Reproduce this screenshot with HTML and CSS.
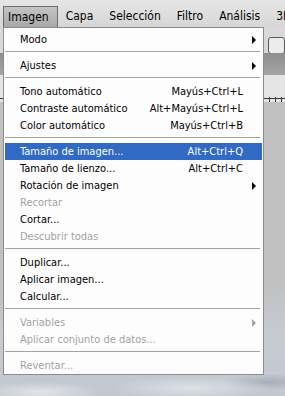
FILE: index.html
```html
<!DOCTYPE html>
<html>
<head>
<title>Imagen</title>
<link rel="stylesheet" href="styles.css">
</head>
<body>
<div class="screen">

<div class="menubar">
<span class="menu-title active">Imagen</span>
<span class="menu-title">Capa</span>
<span class="menu-title">Selección</span>
<span class="menu-title">Filtro</span>
<span class="menu-title">Análisis</span>
<span class="menu-title">3D</span>
</div>

<div class="workspace">
<div class="options-bar">
<span class="opt-box first"></span>
<span class="opt-box"></span>
</div>
<div class="tab-bar"></div>
<div class="ruler"></div>
<div class="canvas"></div>
</div>

<!-- the open Imagen menu -->
<div class="dropdown">
<div class="item sub"><span class="label">Modo</span><span class="arrow"></span></div>
<div class="sep"></div>
<div class="item sub"><span class="label">Ajustes</span><span class="arrow"></span></div>
<div class="sep"></div>
<div class="item"><span class="label">Tono automático</span><span class="keys">Mayús+Ctrl+L</span></div>
<div class="item"><span class="label">Contraste automático</span><span class="keys">Alt+Mayús+Ctrl+L</span></div>
<div class="item"><span class="label">Color automático</span><span class="keys">Mayús+Ctrl+B</span></div>
<div class="sep"></div>
<div class="item selected"><span class="label">Tamaño de imagen...</span><span class="keys">Alt+Ctrl+Q</span></div>
<div class="item"><span class="label">Tamaño de lienzo...</span><span class="keys">Alt+Ctrl+C</span></div>
<div class="item sub"><span class="label">Rotación de imagen</span><span class="arrow"></span></div>
<div class="item disabled"><span class="label">Recortar</span></div>
<div class="item"><span class="label">Cortar...</span></div>
<div class="item disabled"><span class="label">Descubrir todas</span></div>
<div class="sep"></div>
<div class="item"><span class="label">Duplicar...</span></div>
<div class="item"><span class="label">Aplicar imagen...</span></div>
<div class="item"><span class="label">Calcular...</span></div>
<div class="sep"></div>
<div class="item sub disabled"><span class="label">Variables</span><span class="arrow"></span></div>
<div class="item disabled"><span class="label">Aplicar conjunto de datos...</span></div>
<div class="sep"></div>
<div class="item disabled"><span class="label">Reventar...</span></div>
</div>

</div>
</body>
</html>
```

FILE: styles.css
```css
body{
margin:0;
background:#c0c0c0;
}

.screen{
position:relative;
width:285px;
height:396px;
overflow:hidden;
font-family:"DejaVu Sans Condensed","DejaVu Sans",sans-serif;
font-stretch:condensed;
color:#000;
}

/* top menu bar */
.menubar{
height:27px;
box-sizing:border-box;
display:flex;
align-items:flex-end;
gap:3px;
padding-left:3px;
background:linear-gradient(#e6e6e6,#d6d6d6);
font-size:12px;
}

.menu-title{
height:21px;
line-height:20px;
padding:0 8px 0 5px;
box-sizing:border-box;
white-space:nowrap;
}

.menu-title.active{
background:linear-gradient(#c4c4c4,#a8a8a8);
border:1px solid #6c6c6c;
border-bottom:none;
padding-left:4px;
}

/* workspace behind the menu */
.workspace{
height:369px;
display:flex;
flex-direction:column;
}

.options-bar{
height:26px;
flex:none;
display:flex;
align-items:flex-end;
gap:10px;
padding-left:240px;
background:#d9d9d9;
}

.opt-box{
width:22px;
height:15px;
margin-bottom:-1px;
border:1px solid #5a5a5a;
border-radius:3px;
background:#ececec;
}

.tab-bar{
height:22px;
flex:none;
background:linear-gradient(#8e8e8e,#a6a6a6);
}

.ruler{
height:27px;
flex:none;
background:
repeating-linear-gradient(90deg,transparent 0,transparent 5px,#3a3a3a 5px,#3a3a3a 6px) left bottom/100% 5px no-repeat,
linear-gradient(#3a3a3a,#3a3a3a) left 23px/100% 1px no-repeat,
#e4e4e4;
}

.canvas{
flex:1;
background:
radial-gradient(ellipse 60px 10px at 40px 290px,#e2e5ea,transparent),
radial-gradient(ellipse 80px 12px at 190px 286px,#dde0e6,transparent),
radial-gradient(ellipse 50px 8px at 270px 280px,#a9afba,transparent),
linear-gradient(#c0c0c0 0,#c0c0c0 62%,#c6cad1 78%,#c3c8d0 100%);
}

/* dropdown */
.dropdown{
position:absolute;
left:3px;
top:27px;
width:261px;
box-sizing:border-box;
padding:3px 0 0;
background:#fdfdfd;
border:1px solid #8c8c8c;
font-size:11px;
}

.item{
position:relative;
display:flex;
align-items:center;
height:17px;
margin:0 1px;
padding:0 19px 0 15px;
white-space:nowrap;
}

.item .label{
flex:1;
}

.item.selected{
background:#316ac5;
color:#fff;
}

.item.disabled{
color:#a3a3a3;
}

.arrow{
position:absolute;
right:6px;
top:5px;
width:0;
height:0;
border-left:4px solid #000;
border-top:4px solid transparent;
border-bottom:4px solid transparent;
}

.item.disabled .arrow{
border-left-color:#a3a3a3;
}

.sep{
height:1px;
margin:3px 3px 5px 1px;
background:#a2a2a2;
}
```
